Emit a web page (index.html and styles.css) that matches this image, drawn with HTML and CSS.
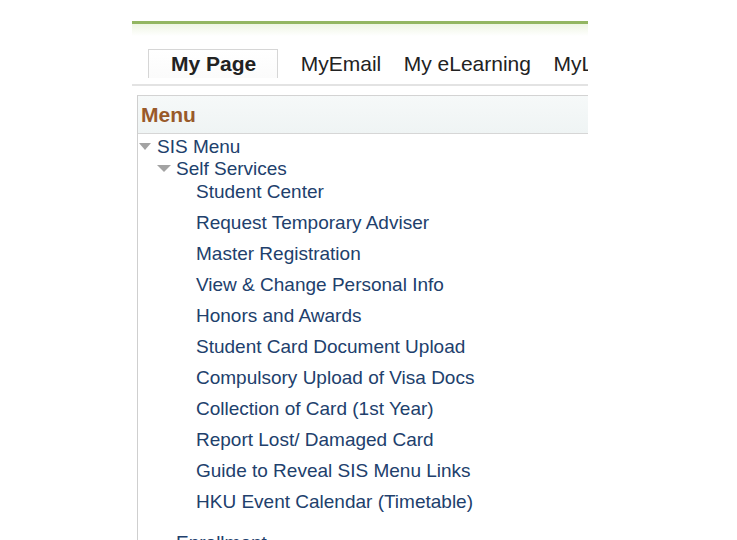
FILE: index.html
```html
<!DOCTYPE html>
<html lang="en">
<head>
<meta charset="utf-8">
<title>My Page</title>
<link rel="stylesheet" href="styles.css">
</head>
<body>
<div class="page">
  <div class="topbar"></div>
  <div class="topglow"></div>
  <nav class="tabs">
    <div class="tab active">My Page</div>
    <div class="tab">MyEmail</div>
    <div class="tab">My eLearning</div>
    <div class="tab">MyLibrary</div>
  </nav>
  <div class="tabline"></div>
  <section class="menu">
    <header class="menu-head">Menu</header>
    <ul class="tree">
      <li class="row lvl0"><span class="tri"></span><span class="label">SIS Menu</span></li>
      <li class="row lvl1"><span class="tri"></span><span class="label">Self Services</span></li>
      <li class="row leaf first"><span class="sp"></span><span class="label">Student Center</span></li>
      <li class="row leaf"><span class="sp"></span><span class="label">Request Temporary Adviser</span></li>
      <li class="row leaf"><span class="sp"></span><span class="label">Master Registration</span></li>
      <li class="row leaf"><span class="sp"></span><span class="label">View &amp; Change Personal Info</span></li>
      <li class="row leaf"><span class="sp"></span><span class="label">Honors and Awards</span></li>
      <li class="row leaf"><span class="sp"></span><span class="label">Student Card Document Upload</span></li>
      <li class="row leaf"><span class="sp"></span><span class="label">Compulsory Upload of Visa Docs</span></li>
      <li class="row leaf"><span class="sp"></span><span class="label">Collection of Card (1st Year)</span></li>
      <li class="row leaf"><span class="sp"></span><span class="label">Report Lost/ Damaged Card</span></li>
      <li class="row leaf"><span class="sp"></span><span class="label">Guide to Reveal SIS Menu Links</span></li>
      <li class="row leaf last"><span class="sp"></span><span class="label">HKU Event Calendar (Timetable)</span></li>
      <li class="row lvl1"><span class="sp"></span><span class="label">Enrollment</span></li>
    </ul>
  </section>
</div>
</body>
</html>
```

FILE: styles.css
```css
html, body {
  margin: 0;
  padding: 0;
  background: #ffffff;
  height: 100%;
  overflow: hidden;
}

body {
  font-family: "Liberation Sans", Arial, Helvetica, sans-serif;
}

.page {
  margin-left: 132px;
  width: 456px;
  overflow: hidden;
  padding-top: 21px;
}

.topbar {
  height: 3px;
  background: #93b662;
}

.topglow {
  height: 12px;
  background: linear-gradient(#eef5e3, #ffffff);
}

.tabs {
  display: flex;
  gap: 22.5px;
  margin-top: 13px;
  padding-left: 16px;
  white-space: nowrap;
}

.tab {
  font-size: 21px;
  line-height: 29px;
  color: #222222;
  flex-shrink: 0;
}

.tab.active {
  font-weight: bold;
  border: 1px solid #d6d6d6;
  border-bottom: none;
  line-height: 28px;
  padding: 0 21px 0 22px;
  background: linear-gradient(#ffffff, #fbfbfb);
}

.tabline {
  height: 2px;
  background: #e3e3e3;
  margin-top: 6px;
}

.menu {
  margin-top: 9px;
  margin-left: 5px;
  margin-right: -10px;
  border-top: 1px solid #d3d3d3;
  border-left: 1px solid #cfcfcf;
  padding-bottom: 40px;
}

.menu-head {
  height: 37px;
  line-height: 37px;
  padding-left: 3px;
  font-size: 21px;
  font-weight: bold;
  color: #995a2a;
  background: linear-gradient(#f6f9f9, #eff4f4);
  border-bottom: 1px solid #d6d6d6;
}

.tree {
  list-style: none;
  margin: 0;
  padding: 1.5px 0 0 0;
}

.row {
  display: flex;
  align-items: center;
  gap: 6px;
  font-size: 19px;
  line-height: 22px;
  color: #21406c;
  white-space: nowrap;
}

.lvl0 { padding-left: 1px; }
.lvl1 { padding-left: 20px; }
.leaf { padding-left: 40px; margin-bottom: 9px; }
.leaf.first { margin-top: 1px; }
.leaf.last { margin-bottom: 19px; }

.tri {
  width: 0;
  height: 0;
  border-left: 6px solid transparent;
  border-right: 6px solid transparent;
  border-top: 7px solid #a3a3a3;
  flex-shrink: 0;
}

.lvl1 .tri {
  border-left-width: 7px;
  border-right-width: 7px;
  margin-left: -1px;
  margin-right: -1px;
}

.sp {
  width: 12px;
  flex-shrink: 0;
}
```
